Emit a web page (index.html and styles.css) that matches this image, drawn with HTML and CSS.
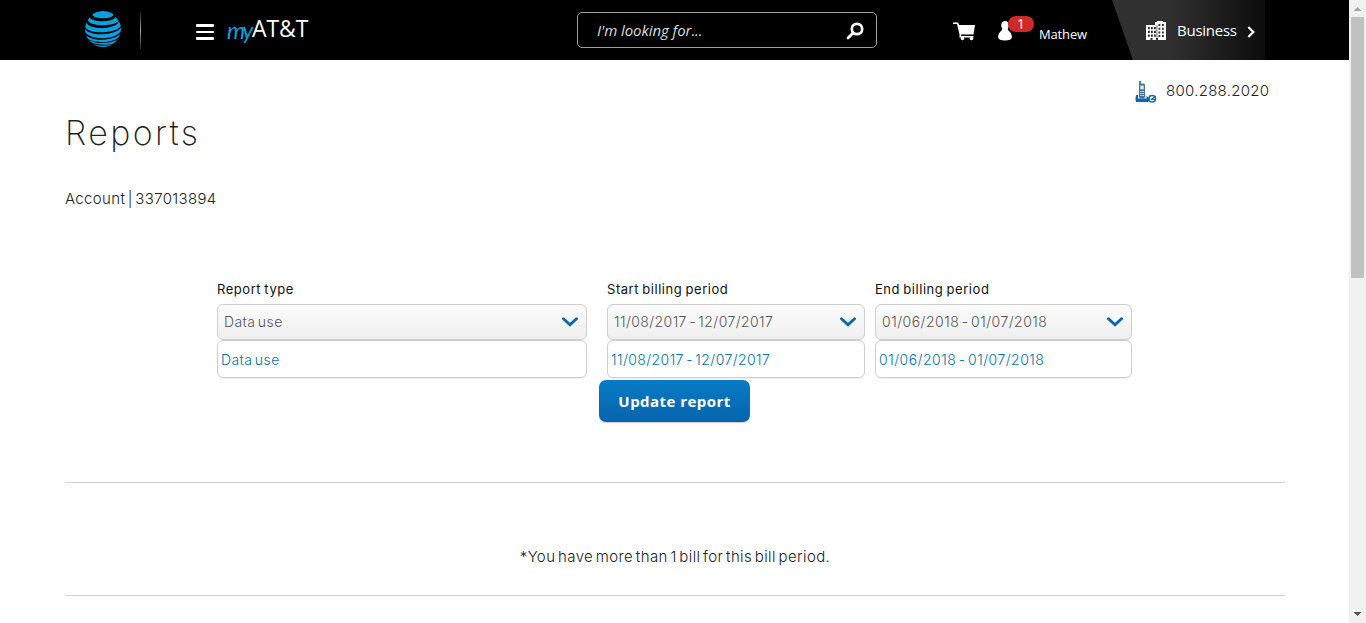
FILE: index.html
```html
<!DOCTYPE html>
<html lang="en">
<head>
<meta charset="utf-8">
<title>Reports</title>
<link rel="stylesheet" href="styles.css">
</head>
<body>
<div class="page">
  <header class="topbar">
    <svg class="globe" viewBox="0 0 36 36">
      <defs><clipPath id="ball"><circle cx="18" cy="18" r="18"/></clipPath></defs>
      <g clip-path="url(#ball)" fill="#0a9fdf">
        <ellipse cx="18" cy="3.6" rx="10.6" ry="3.6"/>
        <path d="M4 6C7 10 16 11 23 9.800Q29 8.800 30.500 6L34 10Q29 14 20 14.200C12 14.500 4 13 3 9.500Z"/>
        <path d="M1 11.500C4 17 15 17.800 23 16.500Q32 15 34 10.500L36.500 15Q32 20 21 21C11 22 1 20 0 15.500Z"/>
        <path d="M0 18C4 23.500 15 24 24 22.500Q33 21 36 16.500V20.500Q31 26 21 27C11 28 3 25 0 21Z"/>
        <path d="M1 24C6 29 16 29.500 24 28Q32 26.500 36 22.500L34 26Q30 30 21 31C13 31.800 5 30 2 27Z"/>
        <path d="M4 29C10 33 25 33.500 33 28.300L30 31.700C24 34.600 12 34.500 6 31.300Z"/>
        <path d="M8 33C15 35.200 22 35.200 28 33L24 36H12Z"/>
      </g>
    </svg>
    <span class="divider"></span>
    <span class="burger"><i></i><i></i><i></i></span>
    <div class="brand">
      <span class="brand-my">my</span>
      <span class="brand-att">AT&amp;T</span>
    </div>
    <div class="search">
      <span class="hint">I'm looking for...</span>
      <svg class="lens" viewBox="0 0 18 18"><circle cx="11" cy="7" r="5.200" fill="none" stroke="#fff" stroke-width="2.700"/><path d="M7 11L2 16" stroke="#fff" stroke-width="2.800" stroke-linecap="round"/></svg>
    </div>
    <svg class="cart" viewBox="0 0 23 19"><path d="M0 .5H5L6.300 3H22L20.500 12.500H8V14H20.500V15.500H6.500V12.500L4 2H0Z" fill="#fff"/><circle cx="9.500" cy="16.500" r="1.800" fill="#fff"/><circle cx="18.500" cy="16.500" r="1.800" fill="#fff"/></svg>
    <div class="account-link">
      <svg class="person" viewBox="0 0 14 20"><ellipse cx="7" cy="4.500" rx="3.800" ry="4.500" fill="#fff"/><path d="M4.500 7.500H9.500Q10 9.500 12 11Q14 13 14 16Q13.500 19.500 7 19.500Q.5 19.500 0 16Q0 13 2 11Q4 9.500 4.500 7.500Z" fill="#fff"/></svg>
      <span class="badge">1</span>
    </div>
    <span class="user">Mathew</span>
    <div class="business">
      <svg class="towers" viewBox="0 0 20 19"><path d="M0 4H9V1H11V0H17V1H20V19H12V17H10V19H0Z" fill="#fff"/><path d="M2 6h1.800v2.300H2zM5 6h1.800v2.300H5zM8 6h1.800v2.300H8zM2 9.700h1.800V12H2zM5 9.700h1.800V12H5zM8 9.700h1.800V12H8zM2 13.400h1.800v2.300H2zM5 13.400h1.800v2.300H5zM8 13.400h1.800v2.300H8zM4.500 17h2v2h-2zM10.600 4h.7v13h-.7zM12.500 3h1.800v2h-1.800zM16 3h1.800v2H16zM12.500 6.700h1.800v2h-1.800zM16 6.700h1.800v2H16zM12.500 10.400h1.800v2h-1.800zM16 10.400h1.800v2H16zM12.500 14h1.800v2h-1.800zM16 14h1.800v2H16z" fill="#2c2c2c"/></svg>
      <span class="business-name">Business</span>
      <svg class="next" viewBox="0 0 8 12"><path d="M1.300 1L6.300 6L1.300 11" fill="none" stroke="#fff" stroke-width="2.200"/></svg>
    </div>
  </header>
  <main class="content">
    <div class="phone">
      <svg class="handset" viewBox="0 0 22 22"><path d="M5 0v4" stroke="#0a67b0" stroke-width="1.600"/><rect x="4" y="2.500" width="6" height="15" rx="1.500" fill="#4a6f9c"/><rect x="5.300" y="4.500" width="3.400" height="3.800" fill="#e4edf6"/><path d="M5.300 10.500h3.600M5.300 12.500h3.600M5.300 14.500h3.600" stroke="#fff" stroke-dasharray="1 .3" stroke-width=".9"/><path d="M1 14H3V17.500H11.500V14.500L13.500 17V21H1Q0 18 1 14Z" fill="#0a67b0"/><circle cx="17.200" cy="17.700" r="3.300" fill="none" stroke="#0a67b0" stroke-width="1.500"/><path d="M12.500 20.500l2.500-3.500M16 18.800l4.500-3.500M17 18.500h4" fill="none" stroke="#0a67b0" stroke-width="1.200"/></svg>
      <span class="phone-number">800.288.2020</span>
    </div>
    <h1 class="title">Reports</h1>
    <p class="account">Account | 337013894</p>
    <form class="filters">
      <div class="field wide">
        <label class="label">Report type</label>
        <div class="select"><span>Data use</span><svg class="chevron" viewBox="0 0 16 10"><path d="M1.500 1.800L8 7.700L14.500 1.800" fill="none" stroke="#0768b1" stroke-width="2.900" stroke-linecap="round"/></svg></div>
        <div class="option"><span>Data use</span></div>
      </div>
      <div class="field start">
        <label class="label">Start billing period</label>
        <div class="select"><span>11/08/2017 - 12/07/2017</span><svg class="chevron" viewBox="0 0 16 10"><path d="M1.500 1.800L8 7.700L14.500 1.800" fill="none" stroke="#0768b1" stroke-width="2.900" stroke-linecap="round"/></svg></div>
        <div class="option"><span>11/08/2017 - 12/07/2017</span></div>
      </div>
      <div class="field end">
        <label class="label">End billing period</label>
        <div class="select"><span>01/06/2018 - 01/07/2018</span><svg class="chevron" viewBox="0 0 16 10"><path d="M1.500 1.800L8 7.700L14.500 1.800" fill="none" stroke="#0768b1" stroke-width="2.900" stroke-linecap="round"/></svg></div>
        <div class="option"><span>01/06/2018 - 01/07/2018</span></div>
      </div>
    </form>
    <button class="update" type="button">Update report</button>
    <p class="notice">*You have more than 1 bill for this bill period.</p>
  </main>
</div>
<div class="scrollbar">
  <svg class="arrow" viewBox="0 0 17 17"><path d="M4.500 11L8.500 7L12.500 11Z" fill="#a3a3a3"/></svg>
  <div class="thumb"></div>
  <svg class="arrow arrow-down" viewBox="0 0 17 17"><path d="M4.500 6L8.500 10L12.500 6Z" fill="#505050"/></svg>
</div>
</body>
</html>
```
FILE: styles.css
```css
* { box-sizing: border-box; }
body {
  margin: 0;
  display: flex;
  width: 1366px;
  height: 623px;
  overflow: hidden;
  background: #fff;
  color: #222;
  font-family: Inter, "Open Sans", sans-serif;
  font-weight: 300;
  white-space: nowrap;
}
h1, p { margin: 0; font-weight: 300; }
svg { display: block; flex: none; }
.page { width: 1349px; height: 623px; }

.topbar {
  display: flex;
  align-items: flex-start;
  height: 60px;
  padding-left: 85px;
  background: #000;
  color: #fff;
  font-family: "Open Sans", sans-serif;
  font-weight: 400;
}
.globe { width: 36px; height: 36px; margin-top: 11px; }
.divider { width: 1px; height: 37px; margin: 12px 0 0 19px; background: linear-gradient(#222, #aaa 50%, #222); }
.burger { display: flex; flex-direction: column; gap: 4px; width: 18px; margin: 24px 0 0 55px; }
.burger i { height: 2.500px; border-radius: 1px; background: #fff; }
.brand { display: flex; width: 82px; height: 36px; margin: 13px 0 0 13px; }
.brand-my {
  width: 24px;
  padding-top: 4px;
  color: #0a9fdf;
  font: italic 400 23px/26px Lato, sans-serif;
  letter-spacing: -2.500px;
}
.brand-att { margin-left: 1px; font: 400 23px/31px "Open Sans", sans-serif; letter-spacing: -0.100px; }
.search {
  display: flex;
  align-items: center;
  justify-content: space-between;
  width: 300px;
  height: 36px;
  margin: 12px 0 0 268px;
  padding: 0 12px 0 19px;
  border: 1px solid #a0a0a0;
  border-radius: 5px;
}
.hint { font-size: 15px; font-style: italic; letter-spacing: -0.070px; color: #ddd; }
.lens { width: 18px; height: 18px; margin-top: 1px; }
.cart { width: 23px; height: 19px; margin: 22px 0 0 76px; }
.account-link { position: relative; width: 14px; margin: 21px 0 0 22px; }
.person { width: 14px; height: 20px; }
.badge {
  position: absolute;
  left: 10px;
  top: -5px;
  width: 26px;
  height: 16px;
  border-radius: 8px;
  background: #cf2a2a;
  font-size: 14px;
  line-height: 16px;
  text-align: center;
}
.user { width: 47px; margin: 24px 0 0 27px; font-size: 13px; line-height: 20px; letter-spacing: -0.150px; }
.business {
  display: flex;
  width: 153px;
  height: 60px;
  margin-left: 26px;
  padding-left: 34px;
  background: linear-gradient(90deg, #303030 38%, #0c0c0c);
  clip-path: polygon(0 0, 100% 0, 100% 100%, 21px 100%);
}
.towers { width: 20px; height: 19px; margin-top: 21px; }
.business-name { width: 60px; margin: 20px 0 0 11px; font-size: 15px; line-height: 20px; letter-spacing: -0.250px; }
.next { width: 8px; height: 12px; margin: 26px 0 0 10px; }

.content { width: 1284px; padding: 20px 0 0 65px; }
.phone { display: flex; height: 24px; margin-left: 1070px; }
.handset { width: 22px; height: 22px; margin-top: 1px; }
.phone-number { margin-left: 9px; font-size: 15px; line-height: 21px; letter-spacing: 0.280px; }
.title { height: 56px; font-size: 34px; line-height: 57px; font-weight: 200; letter-spacing: 2.400px; }
.account { margin-top: 29px; font-size: 15px; line-height: 20px; letter-spacing: 0.340px; word-spacing: -2px; }
.filters { display: flex; margin: 71px 0 0 152px; }
.field { width: 257px; }
.wide { width: 370px; }
.start { width: 258px; margin-left: 20px; }
.end { margin-left: 10px; }
.label {
  display: block;
  height: 24px;
  font-size: 13px;
  line-height: 19px;
  font-weight: 400;
  letter-spacing: 0.550px;
  word-spacing: -1px;
  color: #111;
}
.select, .option {
  display: flex;
  align-items: center;
  justify-content: space-between;
  border: 1px solid #cfcfcf;
  border-radius: 6px;
  font-size: 14px;
  letter-spacing: 0.430px;
  word-spacing: -2px;
}
.end .select, .end .option { letter-spacing: 0.500px; }
.select { height: 36px; padding: 0 8px 2px 6px; background: linear-gradient(#fcfcfc, #efefef); color: #555; }
.option { height: 38px; padding-left: 3px; color: #0571ae; box-shadow: 0 1px 1px #eee; }
.chevron { width: 16px; height: 10px; margin-top: 2px; }
.update {
  display: block;
  width: 151px;
  height: 42px;
  margin: 2px 0 0 534px;
  padding: 0;
  border: 0;
  border-radius: 7px;
  background: linear-gradient(#087bc5, #0664ac);
  color: #fff;
  font: 700 15px "Open Sans", sans-serif;
  letter-spacing: 0.450px;
  box-shadow: 0 1px 1px #ccc;
}
.notice {
  width: 1220px;
  height: 114px;
  margin-top: 60px;
  padding-top: 64px;
  border: solid #d2d2d2;
  border-width: 1px 0;
  font-size: 15px;
  line-height: 20px;
  letter-spacing: 0.400px;
  word-spacing: -2px;
  text-align: center;
}

.scrollbar { display: flex; flex-direction: column; width: 17px; height: 623px; background: #f1f1f1; }
.arrow { width: 17px; height: 17px; }
.thumb { width: 13px; height: 261px; margin-left: 2px; background: #c1c1c1; }
.arrow-down { margin-top: auto; }
```
